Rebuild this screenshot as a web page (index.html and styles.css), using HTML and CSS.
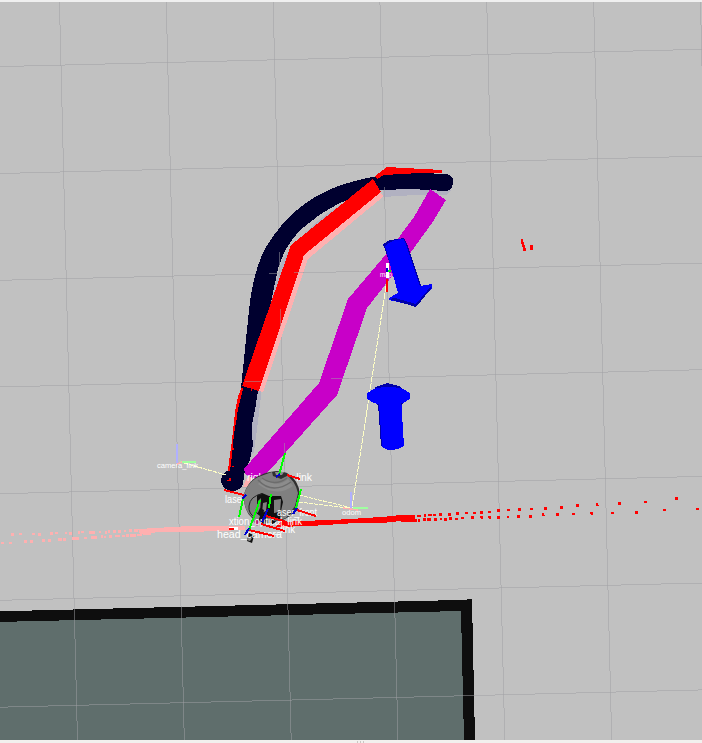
FILE: index.html
```html
<!DOCTYPE html>
<html lang="en">
<head>
<meta charset="utf-8">
<title>Robot view</title>
<link rel="stylesheet" href="styles.css">
</head>
<body>
<main class="view">
<div class="edge"></div>
<svg class="scene" width="702" height="738" viewBox="0 2 702 738" shape-rendering="crispEdges">
  <polygon class="wall" points="0,611.3 467,599.8 467,599 472,599 475,740 0,740"/>
  <polygon class="unknown" points="0,621.9 461,611 464,740 0,740"/>
  <g class="grid">
    <path d="M0 66.6L702 49.3M0 173.5L702 156.2M0 280.3L702 263M0 387L702 369.7M0 493.7L702 476.4M0 600.3L702 583M0 707.2L702 689.9"/>
    <path d="M59.4 0L77.5 740M166.2 0L184.3 740M273.1 0L291.2 740M379.9 0L398 740M486.7 0L504.8 740M593.6 0L611.7 740M700.4 0L718.5 740"/>
  </g>

  <path class="shadow" d="M383 188L416 189L451 190L447 195L415 195L383 197Z"/>
  <path class="shadow" d="M345 202Q310 222 282 260L267 312L275 306L294 252L352 207Z"/>
  <path class="shadow" d="M250 390L262 388L257 429L254 452L248 460Z"/>
  <path class="pink" d="M374 187L384 196L308 259L263 392L250 388L292 249Z"/>
  <path class="navy" d="M447 174C452 175 454 179 453 184C452 189 449 191 445 191L412 189L380 190C352 195 325 208 304 227C285 244 278 263 275 283L269 312L257 375L258 391L255 410L252 425L252 435L253 445L250 460L245 470L243 484C241 490 236 491 231 491C225 490 221 486 221 480C221 475 225 472 229 470L235 425L241 388L249 310C253 275 260 253 274 235C294 207 320 191 348 183C367 177 382 175 412 174Z"/>
  <path class="red" d="M373 179L381 192L304 255L259 391L242 386L291 245Z"/>
  <path class="red" d="M242 387L238 396L235 412L232 440L229 462L228 471H230L232 455L234 434L238 409L241 397L243 389Z"/>
  <path class="red" d="M375 176L377 179L380 178L384 176L402 174L442 173V170L387 167Z"/>
  <path class="navy" d="M377 179L384 175L402 174L420 173L447 174V191L412 189L380 190Z"/>
  <path class="red" d="M229 478H231V481H227V480H229ZM233 448h1v2h-1ZM232 466h2v1h-2ZM236 418h1v2h-1ZM251 389h1v2h-1Z"/>
  <path class="pink" d="M245 482L249 475L252 479L247 487L243 487Z"/>
  <path class="magenta" d="M430 189L446 200L432 223L411 252L367 308L337 395L269 471L256 479L246 475L244 469L319 383L348 299L388 252L414 217Z"/>

  <g class="link">
    <path stroke-dasharray="6 1" d="M386 286L352 508"/>
    <path stroke-dasharray="4 1" d="M184 463L226 475M299 495L352 508M299 502L348 508"/>
  </g>
  <path class="arrow-dark" d="M383 244L390 240L404 238L408 246L423 291L410 296L400 294Z"/>
  <path class="arrow" d="M385 246Q392 239 404 239L420 286L432 284V288L416 306L389 300V298L398 293Z"/>
  <path class="arrow-dark" d="M389 299L395 298L416 304L432 285L430 290L416 307Z"/>
  <path class="arrow-dark" d="M366 397L378 386L387 383L399 386L411 397L401 405L378 405Z"/>
  <ellipse class="arrow" cx="388.5" cy="396" rx="22" ry="9"/>
  <path class="arrow-dark" d="M374 388L387 383L400 388L387 386Z"/>
  <path class="arrow" d="M378 397H401L404 446Q398 450 390 450Q382 449 382 445Z"/>
  <path class="arrow-dark" d="M378 404H379L382 446H381Z"/>

  <g class="grid faint"><path d="M269 273.5h11M294 272.6h10M245 381.1h16M331 378.8h18M279.5 252v25M280.5 309v18M384.5 187v14M284.5 443v26"/></g>

  <path class="hit-left" d="M138 529L190 526L245 526V530L190 532L160 532L140 534Z"/>
  <path class="hit-left" d="M11 533h3v3h-3zM19 533h3v2h-3zM32 533h3v2h-3zM38 533h3v3h-3zM50 532h3v3h-3zM55 532h3v2h-3zM65 532h2v2h-2zM69 532h3v3h-3zM78 531h2v3h-2zM81 531h3v2h-3zM89 531h6v3h-6zM99 531h2v2h-2zM105 531h2v3h-2zM108 530h2v3h-2zM113 530h3v3h-3zM118 530h3v3h-3zM124 530h2v2h-2zM129 529h3v3h-3zM134 529h4v3h-4zM1 542h3v2h-3zM9 542h3v2h-3zM24 540h3v3h-3zM30 540h3v3h-3zM42 539h3v3h-3zM48 539h3v3h-3zM58 538h4v3h-4zM63 538h3v3h-3zM72 537h7v3h-7zM84 537h3v2h-3zM91 536h6v3h-6zM101 535h2v3h-2zM104 536h2v2h-2zM109 535h3v3h-3zM115 535h5v2h-5zM122 535h3v2h-3zM126 534h3v3h-3zM130 534h6v3h-6zM137 534h5v2h-5zM143 533h8v2h-8z"/>
  <path class="hit" d="M280 522L326 520L355 519V523L310 526L275 527Z"/>
  <path class="hit" d="M350 519L380 517V519L415 517V520L390 522L350 523ZM380 517h10v2h-10zM387 516h15v2h-15zM396 515h19v3h-19zM401 519h16v3h-16zM352 519h35v4h-35z"/>
  <path class="hit" d="M417 515h4v2h-4zM424 514h2v3h-2zM428 514h4v2h-4zM433 514h3v2h-3zM439 513h3v3h-3zM448 513h3v3h-3zM456 512h3v3h-3zM465 512h3v2h-3zM473 512h3v2h-3zM480 511h3v3h-3zM488 511h3v2h-3zM497 509h3v3h-3zM507 509h3v2h-3zM518 508h3v3h-3zM530 508h3v2h-3zM544 507h3v3h-3zM560 506h3v3h-3zM576 504h3v3h-3zM596 503h2v3h-2zM598 505h1v1h-1zM618 502h3v3h-3zM644 501h3v2h-3zM675 497h3v3h-3z"/>
  <path class="hit" d="M418 519h2v3h-2zM423 518h3v3h-3zM427 518h4v3h-4zM434 518h3v3h-3zM440 518h2v2h-2zM444 518h3v3h-3zM449 517h3v3h-3zM455 518h3v2h-3zM461 517h3v2h-3zM471 516h3v3h-3zM480 516h3v2h-3zM481 518h2v1h-2zM488 516h3v2h-3zM489 518h2v1h-2zM497 516h3v3h-3zM507 516h2v2h-2zM517 515h3v3h-3zM529 515h3v3h-3zM542 513h2v3h-2zM544 515h1v1h-1zM556 513h3v3h-3zM572 513h3v2h-3zM590 512h3v2h-3zM591 514h2v1h-2zM611 512h3v2h-3zM635 511h3v3h-3zM663 509h3v2h-3zM696 508h3v2h-3z"/>
  <path class="hit" d="M521 239h2v5h-2zM522 242h2v5h-2zM523 245h2v5h-2zM523 248h3v3h-3zM530 245h3v5h-3z"/>

  <g class="labels">
    <text x="247" y="481" textLength="65" lengthAdjust="spacingAndGlyphs">right_hub_link</text>
    <text x="225" y="503" textLength="28" lengthAdjust="spacingAndGlyphs">laser_r</text>
  </g>
  <g shape-rendering="auto">
    <path class="body-dark" d="M261 475Q271 469 287 473Q299 480 300 495L297 508Q290 521 269 523L252 518Q243 510 244 494Q249 479 261 475Z"/>
    <path class="body" d="M261 476L272 472L285 474Q295 480 298 493L295 506L286 518L269 523L252 517Q243 510 244 494Q249 480 261 476Z"/>
    <path class="body-light" d="M263 478Q277 489 288 479L293 486Q276 498 258 484Z"/>
    <path class="crease" d="M258 480Q272 495 291 482M262 478Q275 487 287 478"/>
    <path class="body-dark" d="M272 472L277 471L287 473V476L281 479L273 476Z"/>
    <path class="body-light" d="M275 472H284L282 475H276Z"/>
    <path class="joint" d="M257 495L262 493L269 496L281 496L283 502L281 511L280 519L274 521L270 516L264 520L260 514L256 519L257 506Z"/>
    <path class="outline" d="M262 494Q250 496 249 506Q248 514 256 518"/>
    <path class="body" d="M258 501L261 498L260 512L257 513ZM274 500L281 499L280 514L274 515ZM263 503L267 502L266 511L262 513Z"/>
    <path class="joint" d="M260 508L264 510L263 516L267 519L265 525L259 521L256 517ZM271 514L278 512L277 521L272 525ZM249 532L254 536L252 543L247 541Z"/>
    <path class="body-light" d="M256 513L260 516L258 522L253 522ZM249 537L252 538L250 541L247 540Z"/>
    <path class="plum" d="M256 519L260 522L257 526L254 522Z"/>
  </g>
  <g class="labels">
    <text class="small" x="157" y="468" textLength="41" lengthAdjust="spacingAndGlyphs">camera_link</text>
    <text x="277" y="516" textLength="40" lengthAdjust="spacingAndGlyphs">aser_front</text>
    <text x="229" y="525" textLength="73" lengthAdjust="spacingAndGlyphs">xtion_optical_link</text>
    <text x="275" y="533" textLength="20" lengthAdjust="spacingAndGlyphs">_link</text>
    <text class="large" x="217" y="538" textLength="65" lengthAdjust="spacingAndGlyphs">head_camera</text>
    <text class="small" x="342" y="515" textLength="19" lengthAdjust="spacingAndGlyphs">odom</text>
    <text class="small" x="380" y="277" textLength="12" lengthAdjust="spacingAndGlyphs">map</text>
  </g>
  <g class="axes">
    <path class="x" d="M287 475L300 479M224 490L244 495M297 510L316 516M266 516L287 522M261 524L285 531M249 530L274 536"/>
    <path class="white" d="M229 528h9"/>
    <path class="x" d="M229 529h5"/>
    <path class="y" d="M285 453L279 475M243 499L239 517M301 489L296 508M271 494L269 508M260 500L249 530"/>
    <path class="z" d="M276 477L280 474M242 499L246 495M293 514L297 508M262 522L268 509M245 535L249 528"/>
  </g>
  <g class="axes thin">
    <path class="x" d="M387 279V292"/><path class="white" d="M387 263V278"/><path class="y" d="M388 271H391"/><path class="z" d="M387 268V272"/>
    <path class="pale-z" d="M177 444V463M351 492V508"/>
    <path class="pale-y" d="M180 462H196M353 508H368"/>
    <path class="pale-x" d="M177 464L182 462M343 508L358 510"/>
  </g>
</svg>
<footer class="splitter"><i></i><i></i><i></i></footer>
</main>
</body>
</html>
```
FILE: styles.css
```css
body { margin: 0; background: #c1c1c1; }
.view { display: flex; flex-direction: column; width: 702px; height: 743px; overflow: hidden; }
.edge { height: 2px; background: #f0f0f0; }
.scene { display: block; flex: none; background: #c1c1c1; }
.splitter { height: 3px; background: #f2f0ee; display: flex; justify-content: center; align-items: flex-end; gap: 2px; padding-left: 18px; box-sizing: border-box; }
.splitter i { width: 1px; height: 2px; background: #c9c6c2; }
.wall { fill: #0e0e0e; }
.unknown { fill: #5f6e6c; }
.grid { fill: none; stroke: #a0a0a4; stroke-opacity: .5; stroke-width: 1; }
.shadow { fill: #b1b1c1; }
.pink { fill: #ffb0b0; }
.red, .hit { fill: #f00; }
.hit-left { fill: #ffb0b0; }
.navy { fill: #00002f; }
.magenta { fill: #c800c8; }
.arrow { fill: #00f; }
.arrow-dark { fill: #0000a8; }
.link { fill: none; stroke: #ffffc5; stroke-width: 1; }
.body { fill: #808080; }
.body-light { fill: #8c8c8c; }
.body-dark { fill: #303030; }
.joint { fill: #111; }
.plum { fill: #b02070; }
.crease { fill: none; stroke: #6c6c6c; stroke-width: 1.5; }
.outline { fill: none; stroke: #222; stroke-width: 1; }
.labels { fill: #fff; font: 10px "Liberation Sans", sans-serif; }
.labels .large { font-size: 11px; }
.labels .small { font-size: 8px; }
.axes { fill: none; stroke-width: 2; }
.thin { stroke-width: 1.5; }
.x { stroke: #f00; }
.y { stroke: #0f0; }
.z { stroke: #0000d0; }
.white { stroke: #fff; stroke-width: 3; }
.pale-x { stroke: #ffb0b0; }
.pale-y { stroke: #a0ffa0; }
.pale-z { stroke: #b0b0ff; }
```
